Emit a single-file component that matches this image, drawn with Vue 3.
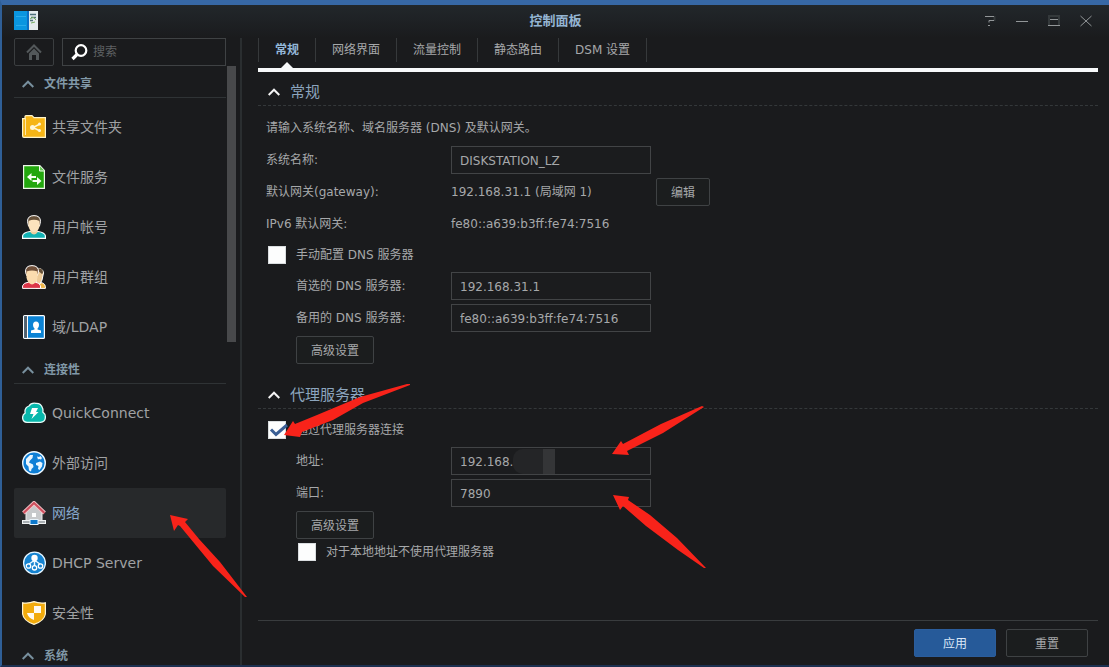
<script setup>
import { ref } from 'vue'

const groups = [
  {
    name: '文件共享',
    items: [
      { id: 'folder', name: '共享文件夹' },
      { id: 'service', name: '文件服务' },
      { id: 'user', name: '用户帐号' },
      { id: 'group', name: '用户群组' },
      { id: 'ldap', name: '域/LDAP' }
    ]
  },
  {
    name: '连接性',
    items: [
      { id: 'quick', name: 'QuickConnect' },
      { id: 'external', name: '外部访问' },
      { id: 'network', name: '网络' },
      { id: 'dhcp', name: 'DHCP Server' },
      { id: 'security', name: '安全性' }
    ]
  },
  { name: '系统', items: [] }
]
const active = ref('network')
const tabs = ['常规', '网络界面', '流量控制', '静态路由', 'DSM 设置']
const tab = ref('常规')

const hostname = ref('DISKSTATION_LZ')
const manualDns = ref(false)
const dns1 = ref('192.168.31.1')
const dns2 = ref('fe80::a639:b3ff:fe74:7516')
const useProxy = ref(true)
const address = ref('192.168.')
const port = ref('7890')
const bypass = ref(false)
</script>

<template>
  <div class="window">
    <header class="titlebar">
      <svg class="logo" width="24" height="19" viewBox="0 0 24 19">
        <rect width="15" height="19" fill="#0a96e0" />
        <path d="M2 5.500h10M2 14.500h10" stroke="#2aabea" />
        <rect x="13" width="2" height="19" fill="#0b6fc4" />
        <rect x="15" width="9" height="19" fill="#e3ebee" />
        <path d="M16 3.500h6M17 6.500h5M16 9.500h3" stroke="#4d6f7c" stroke-width="1.500" />
        <path d="M16 8l3-2 3 3M17 12l4-1" stroke="#76ad62" fill="none" />
      </svg>
      <h1>控制面板</h1>
      <div class="controls">
        <button aria-label="帮助">
          <svg width="12" height="12" viewBox="0 0 12 12"><path class="faint" d="M10.500 1v5" /><path d="M1 1.500h9M10 5.500H5v2M4 10.500h2" /></svg>
        </button>
        <button aria-label="最小化">
          <svg width="12" height="12" viewBox="0 0 12 12"><path d="M0 6.500h12" /></svg>
        </button>
        <button aria-label="最大化">
          <svg width="12" height="12" viewBox="0 0 12 12">
            <path class="faint" d="M1 11V1h10v10" /><path d="M2 4.500h8M0 10.500h12" />
          </svg>
        </button>
        <button aria-label="关闭">
          <svg width="12" height="12" viewBox="0 0 12 12"><path d="M.5 1l11 10M11.500 1l-11 10" /></svg>
        </button>
      </div>
    </header>

    <div class="body">
      <aside class="sidebar">
        <div class="tools">
          <button class="home" aria-label="主页">
            <svg width="16" height="16" viewBox="0 0 16 16">
              <path d="M1 8.500L8 1.500l7 7" fill="none" stroke="#53585a" stroke-width="2" />
              <path d="M3 9.500l5-5 5 5V16h-3v-5H6v5H3z" fill="#53585a" />
            </svg>
          </button>
          <label class="search">
            <svg width="17" height="17" viewBox="0 0 17 17" fill="none" stroke="#fff">
              <circle cx="10" cy="6.500" r="5.300" stroke-width="2.200" />
              <path d="M6 10.500L1.500 15" stroke-width="3.200" />
            </svg>
            <input type="text" placeholder="搜索" aria-label="搜索" />
          </label>
        </div>
        <div class="scroller">
          <nav>
            <section v-for="g in groups" :key="g.name">
              <h2>
                <svg width="12" height="8" viewBox="0 0 12 8"><path d="M.7 7L6 1.700 11.300 7" fill="none" stroke="#78909e" stroke-width="2" /></svg>
                {{ g.name }}
              </h2>
              <a
                v-for="i in g.items" :key="i.id" href="#"
                :class="{ active: active === i.id }" @click.prevent="active = i.id"
              >
                <svg width="24" height="24" viewBox="0 0 24 24">
                  <g v-if="i.id === 'folder'">
                    <path d="M.6 3.600h2.400V1.500Q3 .6 4 .6h6l2 2h11.400v19.800H2Q.6 22.400.6 21z" fill="#f6b516" stroke="#fdf3c9" stroke-width="1.200" />
                    <path d="M3.500 3v17" stroke="#fde9a8" />
                    <path d="M18 9l-7 3.500 7 3.500" fill="none" stroke="#fff6d6" stroke-width="1.500" />
                    <circle cx="10.500" cy="12.500" r="2.500" fill="#fff6d6" />
                    <circle cx="17.500" cy="9" r="1.500" fill="#fff6d6" />
                    <circle cx="17.500" cy="15.500" r="1.500" fill="#fff6d6" />
                  </g>
                  <g v-else-if="i.id === 'service'">
                    <path d="M1.600.6h16.200l4.600 5v17.800H1.600z" fill="#22a70d" stroke="#edf8e8" stroke-width="1.200" />
                    <path d="M17.500 1v5h5" fill="#67c957" stroke="#edf8e8" />
                    <path d="M5 12l4.500-4v3H14v2H9.500v3zM19.500 16L15 12v3h-4.500v2H15v3z" fill="#f5fff2" />
                  </g>
                  <g v-else-if="i.id === 'user'">
                    <path d="M.6 23.400v-2.600Q1 17.600 8 16.500h8q7 1.100 7.400 4.300v2.600z" fill="#12b2b4" stroke="#fff" stroke-width="1.200" />
                    <path d="M8.500 14h7v3.500Q12 21.500 8.500 17.500z" fill="#eccfa1" />
                    <path d="M5.500 6.500Q5.500.6 12 .6t6.500 5.900L17.500 11h-11z" fill="#655038" stroke="#fff" />
                    <path d="M6.500 6Q12 3.500 17.500 6v5.500Q16 17 12 17T6.500 11.500z" fill="#fbe2bd" />
                  </g>
                  <g v-else-if="i.id === 'group'">
                    <path d="M14 17q9 0 9.400 4.500v1.900H14z" fill="#efb646" stroke="#fff" />
                    <path d="M14 3.500q7-1 7.500 4.500L20 15l-2 4-4-1z" fill="#edcb98" stroke="#fff" />
                    <path d="M15 3.500q6-1 6 4.500l-1 1-5-4z" fill="#655038" />
                    <path d="M.6 23.400v-2.600Q1 18 7 17h6q5 1 5.500 3.800v2.600z" fill="#db3548" stroke="#fff" />
                    <path d="M3.500 7.500Q3 .6 10 .6t6.500 6.900L15 11H5z" fill="#705039" stroke="#fff" />
                    <path d="M4.500 6.500q5.500-2 11 0v6q-1 6-5.500 7-4.500-1-5.500-7z" fill="#fbdcae" />
                  </g>
                  <g v-else-if="i.id === 'ldap'">
                    <rect x="1.600" y=".6" width="20.800" height="22.800" rx="1" fill="#0c83d4" stroke="#fff" stroke-width="1.200" />
                    <path d="M2.200 1.200h3v21.600h-3z" fill="#55606a" /><path d="M5.500 1v22" stroke="#fff" />
                    <path d="M14 6.500q3 0 3 3.500 0 2-1.500 3.500v1l3.500 1V18H9v-2.500l3.500-1v-1Q11 12 11 10q0-3.500 3-3.500z" fill="#fff" />
                  </g>
                  <g v-else-if="i.id === 'quick'">
                    <path d="M5 21.400Q.6 21 .6 16.500q0-3 2.600-4.500Q2 7 7 5q2-3.500 7-2.700Q19 2 20.500 7q.8 2 .3 4 2.600 2 2.600 5 0 5-5 5.400z" fill="#08b8ac" stroke="#e7fbf8" stroke-width="1.300" />
                    <path d="M10 7h6l-2 4h2.500L9.500 18l2-5H8z" fill="#fff" />
                  </g>
                  <g v-else-if="i.id === 'external'">
                    <circle cx="12" cy="12" r="11.300" fill="#0e7fd6" stroke="#eef8ff" stroke-width="1.400" />
                    <path d="M4 8l4-4h3l-.5 3L8 9.500l-1 2 4 2 .5 2.500-2 2-.5 2.500-2-1-.5-4L4 13z" fill="#e9f6ff" />
                    <path d="M15 5.500l2 .5 1.500-1 1.500 2-1 1.500-2-.5-1 .5zM14 12l4-1.500 2.500 1.500-.5 3.500-2.500 3.500-1.500-1 .5-3-2.500-1z" fill="#e9f6ff" />
                  </g>
                  <g v-else-if="i.id === 'network'">
                    <path d="M4 11L12 3l8 8v9H4z" fill="#c7c9cb" stroke="#eee" />
                    <path d="M1.500 12L12 2l10.500 10" fill="none" stroke="#f3c8cc" stroke-width="4" />
                    <path d="M1.500 12L12 2l10.500 10" fill="none" stroke="#cf515f" stroke-width="2.200" />
                    <rect x="10" y="12" width="4" height="4" fill="#fff" />
                    <rect x=".5" y="19.500" width="23" height="3" fill="#a9afb3" stroke="#f0f2f3" />
                    <rect x="8" y="18.500" width="8" height="5" fill="#0d78cb" stroke="#e6f2fa" />
                  </g>
                  <g v-else-if="i.id === 'dhcp'">
                    <circle cx="12.500" cy="12" r="10.900" fill="#1583d0" stroke="#e5f5ff" stroke-width="1.300" />
                    <path d="M12.500 8v7M12 9.500l-5.500 4M13 9.500l5.500 4" fill="none" stroke="#eaf7ff" stroke-width="1.500" />
                    <circle cx="12.500" cy="7" r="3.200" fill="#fff" />
                    <g fill="#1583d0" stroke="#fff" stroke-width="1.300"><circle cx="6.500" cy="15" r="2.200" /><circle cx="12.500" cy="16.800" r="2.200" /><circle cx="18.500" cy="15" r="2.200" /></g>
                  </g>
                  <g v-else>
                    <path d="M12 .6q5 2 11.400 1.200V13q-1 7-11.400 10.400Q1.600 20 .6 13V1.800Q7 2.600 12 .6z" fill="#f2ab0c" stroke="#fff4d0" stroke-width="1.200" />
                    <path d="M12 5h7v7h-7zM5 12h7v7q-6-2-7-7z" fill="#fffaf0" />
                  </g>
                </svg>
                {{ i.name }}
              </a>
            </section>
          </nav>
          <div class="track"><div class="thumb"></div></div>
        </div>
      </aside>

      <main>
        <div class="tabs" role="tablist">
          <button
            v-for="t in tabs" :key="t" role="tab" :aria-selected="tab === t"
            :class="{ current: tab === t }" @click="tab = t"
          >{{ t }}</button>
        </div>

        <form class="content" @submit.prevent>
          <section class="block">
            <h3>
              <svg width="12" height="8" viewBox="0 0 12 8"><path d="M.7 7L6 1.700 11.300 7" fill="none" stroke="#f4f4f4" stroke-width="2" /></svg>
              常规
            </h3>
            <div class="rows">
              <p class="row">请输入系统名称、域名服务器 (DNS) 及默认网关。</p>
              <div class="row">
                <label for="hostname">系统名称:</label>
                <input id="hostname" v-model="hostname" type="text" />
              </div>
              <div class="row">
                <span class="label">默认网关(gateway):</span>
                <span class="value">192.168.31.1 (局域网 1)</span>
                <button class="btn edit">编辑</button>
              </div>
              <div class="row">
                <span class="label">IPv6 默认网关:</span>
                <span class="value">fe80::a639:b3ff:fe74:7516</span>
              </div>
              <label class="check">
                <input v-model="manualDns" type="checkbox" />手动配置 DNS 服务器
              </label>
              <div class="row sub">
                <label for="dns1">首选的 DNS 服务器:</label>
                <input id="dns1" v-model="dns1" type="text" />
              </div>
              <div class="row sub">
                <label for="dns2">备用的 DNS 服务器:</label>
                <input id="dns2" v-model="dns2" type="text" />
              </div>
              <div class="row sub"><button class="btn">高级设置</button></div>
            </div>
          </section>

          <section class="block">
            <h3>
              <svg width="12" height="8" viewBox="0 0 12 8"><path d="M.7 7L6 1.700 11.300 7" fill="none" stroke="#f4f4f4" stroke-width="2" /></svg>
              代理服务器
            </h3>
            <div class="rows">
              <label class="check">
                <input v-model="useProxy" type="checkbox" />
                <svg v-if="useProxy" class="tick" width="20" height="18" viewBox="0 0 20 18">
                  <path d="M3 8.500l5 5L19 4" fill="none" stroke="#3a5f95" stroke-width="3" />
                </svg>通过代理服务器连接
              </label>
              <div class="row sub">
                <label for="address">地址:</label>
                <span class="masked">
                  <input id="address" v-model="address" type="text" />
                  <span class="mask"></span>
                </span>
              </div>
              <div class="row sub">
                <label for="port">端口:</label>
                <input id="port" v-model="port" type="text" />
              </div>
              <div class="row sub"><button class="btn">高级设置</button></div>
              <label class="check nested">
                <input v-model="bypass" type="checkbox" />对于本地地址不使用代理服务器
              </label>
            </div>
          </section>
        </form>

        <footer>
          <button class="btn action primary">应用</button>
          <button class="btn action">重置</button>
        </footer>
      </main>
    </div>

    <svg class="arrows" width="1109" height="667" viewBox="0 0 1109 667" fill="#f8231a" aria-hidden="true">
      <path d="M284 435L293 421 295 424 317 415 360 397 407 384 410 384 410 385 363 403 333 420 302 432 300 437z" />
      <path d="M612 454L621 441 623 444 661 424 702 406 704 407 663 433 627 451 629 455z" />
      <path d="M613 495L629 497 628 500 650 515 677 538 706 568 704 568 678 550 646 526 623 506 620 510z" />
      <path d="M170 515L188 519 185 522 199 539 220 562 247 597 245 597 213 566 180 526 178 525 174 531z" />
    </svg>
  </div>
</template>

<style>
body {
  margin: 0;
  background: #1a1c1e;
}
</style>

<style scoped>
* {
  box-sizing: border-box;
}
.window {
  position: relative;
  display: flex;
  flex-direction: column;
  height: 100vh;
  overflow: hidden;
  border: solid #2f5f97;
  border-width: 5px 0 2px 2px;
  border-top-color: #3768a6;
  border-bottom-color: #1c3050;
  background: #1a1b1d;
  color: #a6a8aa;
  font: 12px/20px "DejaVu Sans", "Noto Sans CJK SC", sans-serif;
}
button,
input {
  font: inherit;
  color: inherit;
  margin: 0;
}
h1,
h2,
h3,
p {
  margin: 0;
}
svg {
  flex: none;
}
.titlebar {
  display: grid;
  grid-template-columns: 1fr auto 1fr;
  align-items: center;
  flex: none;
  height: 33px;
  padding: 0 12px 2px;
  background: linear-gradient(#22272b, #1a1b1d);
}
h1 {
  font-size: 13px;
  line-height: 20px;
  color: #94b4d2;
}
.controls {
  display: flex;
  justify-content: flex-end;
  gap: 20px;
  margin-right: 5px;
}
.controls button {
  display: flex;
  padding: 0;
  border: 0;
  background: none;
}
.controls path {
  fill: none;
  stroke: #929698;
}
.controls .faint {
  stroke: #34393b;
  stroke-width: 2;
}
.body {
  display: flex;
  flex: 1;
  min-height: 0;
}
.sidebar {
  display: flex;
  flex-direction: column;
  flex: none;
  width: 240px;
  padding: 0 4px 0 12px;
  border-right: 2px solid #2a2e30;
}
.tools {
  display: flex;
  flex: none;
  gap: 8px;
  height: 28px;
  margin-right: 10px;
}
.home {
  display: flex;
  align-items: center;
  justify-content: center;
  width: 40px;
  padding: 0;
  border: 1px solid #3b3e40;
  border-radius: 2px;
  background: none;
}
.search {
  display: flex;
  flex: 1;
  align-items: center;
  gap: 5px;
  min-width: 0;
  padding: 0 8px;
  border: 1px solid #3f4244;
}
.search input {
  flex: 1;
  min-width: 0;
  padding: 0;
  border: 0;
  background: none;
}
.search input::placeholder {
  color: #5e6163;
  opacity: 1;
}
.scroller {
  display: flex;
  flex: 1;
  min-height: 0;
  overflow: hidden;
}
nav {
  flex: 1;
}
.track {
  width: 9px;
  margin-left: 1px;
}
.thumb {
  height: 46%;
  background: #48494b;
}
h2 {
  display: flex;
  align-items: center;
  gap: 10px;
  height: 32px;
  margin-bottom: 4px;
  padding: 5px 8px 0;
  border-bottom: 1px solid #2f3335;
  font-size: 12px;
  color: #8199a8;
}
nav a {
  display: flex;
  align-items: center;
  gap: 6px;
  height: 50px;
  padding: 0 8px;
  border-radius: 2px;
  color: #a0a2a4;
  font-size: 14px;
  text-decoration: none;
}
nav a.active {
  background: #27292b;
  color: #87a8cb;
}
main {
  display: flex;
  flex: 1;
  flex-direction: column;
  min-width: 0;
  padding: 0 11px 0 16px;
}
.tabs {
  display: flex;
  flex: none;
  height: 34px;
  padding-bottom: 6px;
  border-bottom: 4px solid #f7f9fa;
}
.tabs button {
  position: relative;
  padding: 0 16px;
  border: 0;
  border-left: 1px solid #36393b;
  background: none;
}
.tabs button:last-child {
  border-right: 1px solid #36393b;
}
.tabs .current {
  color: #94b8d9;
  font-weight: bold;
}
.tabs .current::after {
  content: "";
  position: absolute;
  left: 50%;
  bottom: -6px;
  margin-left: -6px;
  border: solid transparent;
  border-width: 0 6px 6px;
  border-bottom-color: #f7f9fa;
}
.content {
  display: flex;
  flex: 1;
  flex-direction: column;
  gap: 11px;
  min-height: 0;
  padding-top: 2px;
}
h3 {
  display: flex;
  align-items: center;
  gap: 10px;
  height: 32px;
  padding: 5px 10px 0;
  border-bottom: 1px dashed #34383a;
  font-size: 15px;
  font-weight: normal;
  color: #8ca5bd;
}
.rows {
  padding: 6px 0 0 8px;
}
.row {
  display: flex;
  align-items: center;
  height: 32px;
}
.row label,
.label {
  flex: none;
  width: 185px;
}
.sub {
  padding-left: 30px;
}
.sub label {
  width: 155px;
}
.row input {
  width: 200px;
  height: 28px;
  padding: 2px 8px 0;
  border: 1px solid #424446;
  background: #1b1c1e;
}
.value {
  width: 205px;
}
.btn {
  height: 28px;
  padding: 2px 14px 0;
  border: 1px solid #3f4244;
  border-radius: 2px;
  background: #1b1d1e;
}
.check {
  position: relative;
  display: flex;
  align-items: center;
  gap: 10px;
  width: fit-content;
  height: 30px;
  padding-left: 2px;
}
.check input {
  appearance: none;
  width: 18px;
  height: 18px;
  border: 1px solid #d9dddf;
  background: #fcfdfd;
}
.tick {
  position: absolute;
  left: 2px;
  top: 6px;
}
.nested {
  height: 22px;
  margin-left: 30px;
}
.masked {
  position: relative;
  display: flex;
}
.mask {
  position: absolute;
  left: 62px;
  top: 2px;
  width: 42px;
  height: 25px;
  border-radius: 10px 0 0 10px;
  background: linear-gradient(90deg, #242527 0 30px, #343537 30px);
}
footer {
  display: flex;
  flex: none;
  justify-content: flex-end;
  gap: 10px;
  padding: 8px 10px;
  border-top: 1px solid #393c3e;
}
.action {
  width: 82px;
}
.primary {
  border-color: #2b5d9c;
  background: #265a99;
  color: #dce9f7;
}
.arrows {
  position: absolute;
  left: -2px;
  top: -5px;
  pointer-events: none;
}
</style>
